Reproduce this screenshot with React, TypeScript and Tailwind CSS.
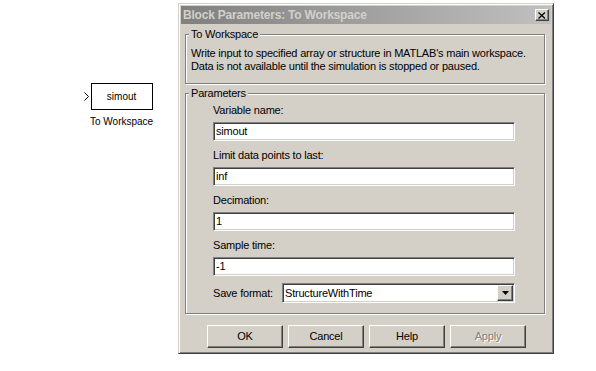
const raised =
  'border border-t-white border-l-white border-r-[#404040] border-b-[#404040] shadow-[inset_-1px_-1px_0_#808080]';
const sunken =
  'border border-t-[#808080] border-l-[#808080] border-r-white border-b-white shadow-[inset_1px_1px_0_#404040,inset_-1px_-1px_0_#d4d0c8]';

const TextField = ({ value }: { value: string }) => (
  <div className={`${sunken} w-[302px] h-[19px] bg-white flex items-center pl-[2px] leading-[13px]`}>
    {value}
  </div>
);

const Field = ({ label, value }: { label: string; value: string }) => (
  <div className="flex flex-col mb-[8px]">
    <div className="h-[13px] leading-[13px] mb-[5px]">{label}</div>
    <TextField value={value} />
  </div>
);

const GroupBox = ({
  title,
  className,
  children,
}: {
  title: string;
  className: string;
  children: React.ReactNode;
}) => (
  <div
    className={`relative ml-[4px] w-[360px] border border-[#808080] shadow-[inset_1px_1px_0_#fff,1px_1px_0_#fff] ${className}`}
  >
    <div className="absolute -top-[7px] left-[3px] px-[2px] bg-[#d4d0c8] leading-[13px]">{title}</div>
    {children}
  </div>
);

const Button = ({ label, disabled }: { label: string; disabled?: boolean }) => (
  <div
    className={`${raised} w-[76px] h-[23px] flex items-center justify-center bg-[#d4d0c8] ${
      disabled ? 'text-[#808080] [text-shadow:1px_1px_0_#fff]' : 'text-black'
    }`}
  >
    {label}
  </div>
);

export default function App() {
  return (
    <div className="w-[596px] h-[371px] bg-white flex font-['Liberation_Sans',Arial,sans-serif] text-[11px] tracking-[-0.2px] text-black">
      {/* Simulink block */}
      <div className="w-[178px] pl-[84px] pt-[83px]">
        <div className="flex items-start">
          <svg width="6" height="27" viewBox="0 0 6 27" className="mr-0">
            <path d="M0.5 9.5 L4.5 13.5 L0.5 17.5" fill="none" stroke="#000" strokeWidth="1" />
          </svg>
          <div className="flex flex-col items-center">
            <div className="w-[62px] h-[27px] border border-black flex items-center justify-center text-[10px] tracking-normal">
              simout
            </div>
            <div className="mt-[6px] text-[10px] tracking-normal leading-[12px] whitespace-nowrap">To Workspace</div>
          </div>
        </div>
      </div>

      {/* Dialog */}
      <div className="mt-[3px] w-[376px] h-[351px] bg-[#d4d0c8] border border-t-[#d4d0c8] border-l-[#d4d0c8] border-r-[#404040] border-b-[#404040] shadow-[inset_1px_1px_0_#fff,inset_-1px_-1px_0_#808080] p-[2px] flex flex-col">
        <div className="h-[18px] flex items-center justify-between bg-[linear-gradient(to_right,#808080,#c0c0c0)] pl-[2px] pr-[2px]">
          <span className="font-bold text-[12px] text-[#d4d0c8] leading-[14px] whitespace-nowrap">
            Block Parameters: To Workspace
          </span>
          <div className={`${raised} w-[14px] h-[12px] bg-[#d4d0c8] flex items-center justify-center`}>
            <svg width="8" height="7" viewBox="0 0 8 7">
              <path d="M0.5 0.5 L7 6.5 M7 0.5 L0.5 6.5" stroke="#000" strokeWidth="1.3" />
            </svg>
          </div>
        </div>

        <GroupBox title="To Workspace" className="mt-[10px] h-[50px] pl-[5px] pt-[12px] leading-[13px]">
          <div>Write input to specified array or structure in MATLAB's main workspace.</div>
          <div>Data is not available until the simulation is stopped or paused.</div>
        </GroupBox>

        <GroupBox title="Parameters" className="mt-[9px] h-[221px] pl-[27px] pt-[10px]">
          <Field label="Variable name:" value="simout" />
          <Field label="Limit data points to last:" value="inf" />
          <Field label="Decimation:" value="1" />
          <Field label="Sample time:" value="-1" />
          <div className="flex items-center -mt-[1px]">
            <div className="w-[69px] leading-[13px]">Save format:</div>
            <div className={`${sunken} w-[233px] h-[20px] bg-white flex items-center justify-between pl-[2px] pr-[1px]`}>
              <span className="leading-[13px]">StructureWithTime</span>
              <div className={`${raised} w-[16px] h-[16px] bg-[#d4d0c8] flex items-center justify-center`}>
                <svg width="7" height="4" viewBox="0 0 7 4">
                  <path d="M0 0 H7 L3.5 4 Z" fill="#000" />
                </svg>
              </div>
            </div>
          </div>
        </GroupBox>

        <div className="mt-[11px] ml-[26px] flex gap-[5px]">
          <Button label="OK" />
          <Button label="Cancel" />
          <Button label="Help" />
          <Button label="Apply" disabled />
        </div>
      </div>
    </div>
  );
}
